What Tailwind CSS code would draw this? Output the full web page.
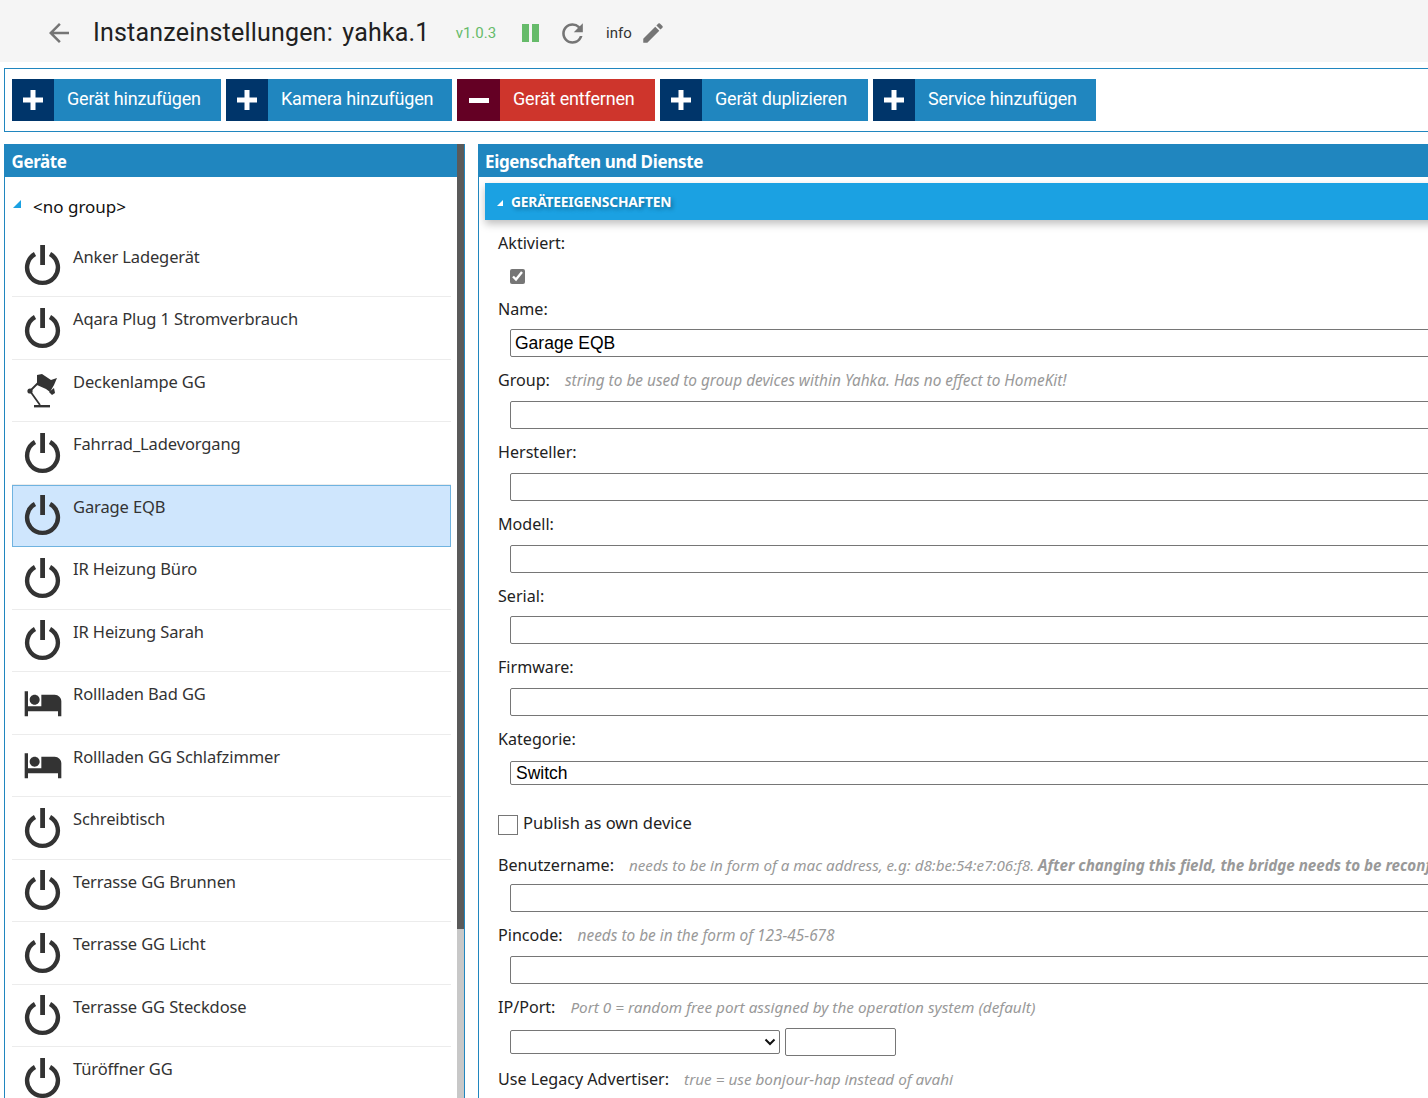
<!DOCTYPE html>
<html lang="de">
<head>
    <meta charset="UTF-8">
    <title>Instanzeinstellungen: yahka.1</title>
    <script src="https://cdn.jsdelivr.net/npm/@tailwindcss/browser@4"></script>
</head>
<body class="bg-white w-[1428px] h-[1098px] overflow-hidden font-['Noto_Sans',sans-serif]">
    <svg class="hidden">
        <defs>
            <symbol id="power" viewBox="0 0 40 42">
                <path d="M12 9a15.4 15.4 0 1 0 15 0" fill="none" stroke="#333" stroke-width="4.4"/>
                <rect x="17.2" y="0" width="4.8" height="20" fill="#333"/>
            </symbol>
            <symbol id="lamp" viewBox="0 0 40 42">
                <path d="M14 2l5-1 9 6 6-2-3 7-4 7-4-3-9-4z" fill="#333"/>
                <path d="M26 19l5-4 1 5-3 2z" fill="#333"/>
                <path d="M7 18L16 9M7 18l10 14" fill="none" stroke="#333" stroke-width="1.8"/>
                <circle cx="7" cy="18" r="2.6" fill="#333"/>
                <rect x="11" y="32" width="16" height="2.4" fill="#333"/>
            </symbol>
            <symbol id="bed" viewBox="0 0 24 24">
                <path fill="#333" d="M7 13c1.66 0 3-1.34 3-3S8.66 7 7 7s-3 1.34-3 3 1.34 3 3 3zm12-6h-8v7H3V5H1v15h2v-3h18v3h2v-9c0-2.21-1.79-4-4-4z"/>
            </symbol>
        </defs>
    </svg>

    <!-- Title bar -->
    <header class="h-[62px] pt-[4px] bg-[#f5f5f5] flex items-center font-['Roboto',sans-serif]">
        <svg class="ml-[44px] w-[30px] h-[30px]" viewBox="0 0 24 24"><path fill="#757575" d="M20 11H7.83l5.59-5.59L12 4l-8 8 8 8 1.41-1.41L7.83 13H20v-2z"/></svg>
        <h1 class="ml-[19px] text-[25px] tracking-[0.2px] text-[#212121] whitespace-nowrap">Instanzeinstellungen: <span class="ml-[3px]">yahka.1</span></h1>
        <span class="ml-[26px] text-[15px] text-[#66bb6a]">v1.0.3</span>
        <div class="ml-[26px] flex gap-[3px]">
            <div class="w-[7px] h-[18px] bg-[#66bb6a]"></div>
            <div class="w-[7px] h-[18px] bg-[#66bb6a]"></div>
        </div>
        <svg class="ml-[18px] w-[31px] h-[31px]" viewBox="0 0 24 24"><path fill="#757575" d="M17.65 6.35A7.96 7.96 0 0 0 12 4c-4.42 0-7.99 3.58-7.99 8s3.57 8 7.99 8c3.73 0 6.84-2.55 7.73-6h-2.08A5.99 5.99 0 0 1 12 18c-3.31 0-6-2.69-6-6s2.69-6 6-6c1.66 0 3.14.69 4.22 1.78L13 11h7V4l-2.35 2.35z"/></svg>
        <span class="ml-[18px] text-[15px] text-[#333]">info</span>
        <svg class="ml-[8px] w-[26px] h-[26px]" viewBox="0 0 24 24"><path fill="#757575" d="M3 17.25V21h3.75L17.81 9.94l-3.75-3.75L3 17.25zM20.71 7.04a1 1 0 0 0 0-1.41l-2.34-2.34a1 1 0 0 0-1.41 0l-1.83 1.83 3.75 3.75 1.83-1.83z"/></svg>
    </header>

    <!-- Toolbar -->
    <div class="mt-[6px] ml-[4px] w-[1500px] h-[64px] border border-[#2086bf] flex items-center gap-[5px] pl-[7px] font-['Roboto',sans-serif] text-[18px] tracking-[-0.17px] text-white">
        <div class="flex w-[209px] h-[42px] bg-[#2086bf]">
            <div class="w-[42px] bg-[#00356a] flex items-center justify-center"><svg class="w-[22px] h-[22px]" viewBox="0 0 22 22"><path fill="#fff" d="M8.5 1h5v7.5H21v5h-7.5V21h-5v-7.5H1v-5h7.5z"/></svg></div>
            <span class="ml-[13px] leading-[40px] whitespace-nowrap">Gerät hinzufügen</span>
        </div>
        <div class="flex w-[226px] h-[42px] bg-[#2086bf]">
            <div class="w-[42px] bg-[#00356a] flex items-center justify-center"><svg class="w-[22px] h-[22px]" viewBox="0 0 22 22"><path fill="#fff" d="M8.5 1h5v7.5H21v5h-7.5V21h-5v-7.5H1v-5h7.5z"/></svg></div>
            <span class="ml-[13px] leading-[40px] whitespace-nowrap">Kamera hinzufügen</span>
        </div>
        <div class="flex w-[198px] h-[42px] bg-[#ce352c]">
            <div class="w-[43px] bg-[#640024] flex items-center justify-center"><div class="w-[20px] h-[5px] bg-white"></div></div>
            <span class="ml-[13px] leading-[40px] whitespace-nowrap">Gerät entfernen</span>
        </div>
        <div class="flex w-[208px] h-[42px] bg-[#2086bf]">
            <div class="w-[42px] bg-[#00356a] flex items-center justify-center"><svg class="w-[22px] h-[22px]" viewBox="0 0 22 22"><path fill="#fff" d="M8.5 1h5v7.5H21v5h-7.5V21h-5v-7.5H1v-5h7.5z"/></svg></div>
            <span class="ml-[13px] leading-[40px] whitespace-nowrap">Gerät duplizieren</span>
        </div>
        <div class="flex w-[223px] h-[42px] bg-[#2086bf]">
            <div class="w-[42px] bg-[#00356a] flex items-center justify-center"><svg class="w-[22px] h-[22px]" viewBox="0 0 22 22"><path fill="#fff" d="M8.5 1h5v7.5H21v5h-7.5V21h-5v-7.5H1v-5h7.5z"/></svg></div>
            <span class="ml-[13px] leading-[40px] whitespace-nowrap">Service hinzufügen</span>
        </div>
    </div>

    <div class="mt-[12px] ml-[4px] flex gap-[13px] w-[1500px] h-[954px] items-start">
        <!-- Device list -->
        <section class="relative w-[461px] h-[954px] border-x border-[#2086bf] overflow-hidden">
            <div class="h-[33px] -mx-px bg-[#2086bf] text-white font-bold text-[17px] leading-[36px] pl-[7.5px] tracking-[-0.4px]">Geräte</div>
            <div class="absolute right-0 top-0 w-[7px] h-[954px] bg-[#c8c8c8]"><div class="h-[785px] bg-[#5a5a5a]"></div></div>
            <div class="h-[20px]"></div>
            <div class="relative h-[20px] pl-[28px] text-[17px] leading-[20px] text-[#111]">
                <span class="absolute left-[8px] top-[3px] w-0 h-0 border-l-[8px] border-b-[8px] border-l-transparent border-b-[#1ba1e2]"></span>&lt;no group&gt;
            </div>
            <ul class="mt-[17px] ml-[7px] w-[439px] text-[16.5px] tracking-[-0.12px] text-[#333]">
                <li class="flex h-[63px] border-b border-[#ececec] pl-[11px] pt-[11px]"><svg class="w-[40px] h-[42px] shrink-0"><use href="#power"/></svg><span class="ml-[10px] leading-[24px]">Anker Ladegerät</span></li>
                <li class="flex h-[62.5px] border-b border-[#ececec] pl-[11px] pt-[10.5px]"><svg class="w-[40px] h-[42px] shrink-0"><use href="#power"/></svg><span class="ml-[10px] mt-[-0.5px] leading-[24px]">Aqara Plug 1 Stromverbrauch</span></li>
                <li class="flex h-[62.5px] border-b border-[#ececec] pl-[11px] pt-[13px]"><svg class="w-[40px] h-[42px] shrink-0"><use href="#lamp"/></svg><span class="ml-[10px] mt-[-3px] leading-[24px]">Deckenlampe GG</span></li>
                <li class="flex h-[62.5px] border-b border-[#ececec] pl-[11px] pt-[10.5px]"><svg class="w-[40px] h-[42px] shrink-0"><use href="#power"/></svg><span class="ml-[10px] mt-[-0.5px] leading-[24px]">Fahrrad_Ladevorgang</span></li>
                <li class="flex h-[62.5px] border border-[#6fb3e0] bg-[#cfe6fd] pl-[10px] pt-[9.5px]"><svg class="w-[40px] h-[42px] shrink-0"><use href="#power"/></svg><span class="ml-[10px] mt-[-0.5px] leading-[24px]">Garage EQB</span></li>
                <li class="flex h-[62.5px] border-b border-[#ececec] pl-[11px] pt-[10.5px]"><svg class="w-[40px] h-[42px] shrink-0"><use href="#power"/></svg><span class="ml-[10px] mt-[-0.5px] leading-[24px]">IR Heizung Büro</span></li>
                <li class="flex h-[62.5px] border-b border-[#ececec] pl-[11px] pt-[10.5px]"><svg class="w-[40px] h-[42px] shrink-0"><use href="#power"/></svg><span class="ml-[10px] mt-[-0.5px] leading-[24px]">IR Heizung Sarah</span></li>
                <li class="flex h-[62.5px] border-b border-[#ececec] pl-[10.5px] pt-[10.5px]"><svg class="w-[40px] h-[40px] shrink-0"><use href="#bed"/></svg><span class="ml-[10.5px] mt-[-0.5px] leading-[24px]">Rollladen Bad GG</span></li>
                <li class="flex h-[62.5px] border-b border-[#ececec] pl-[10.5px] pt-[10.5px]"><svg class="w-[40px] h-[40px] shrink-0"><use href="#bed"/></svg><span class="ml-[10.5px] mt-[-0.5px] leading-[24px]">Rollladen GG Schlafzimmer</span></li>
                <li class="flex h-[62.5px] border-b border-[#ececec] pl-[11px] pt-[10.5px]"><svg class="w-[40px] h-[42px] shrink-0"><use href="#power"/></svg><span class="ml-[10px] mt-[-0.5px] leading-[24px]">Schreibtisch</span></li>
                <li class="flex h-[62.5px] border-b border-[#ececec] pl-[11px] pt-[10.5px]"><svg class="w-[40px] h-[42px] shrink-0"><use href="#power"/></svg><span class="ml-[10px] mt-[-0.5px] leading-[24px]">Terrasse GG Brunnen</span></li>
                <li class="flex h-[62.5px] border-b border-[#ececec] pl-[11px] pt-[10.5px]"><svg class="w-[40px] h-[42px] shrink-0"><use href="#power"/></svg><span class="ml-[10px] mt-[-0.5px] leading-[24px]">Terrasse GG Licht</span></li>
                <li class="flex h-[62.5px] border-b border-[#ececec] pl-[11px] pt-[10.5px]"><svg class="w-[40px] h-[42px] shrink-0"><use href="#power"/></svg><span class="ml-[10px] mt-[-0.5px] leading-[24px]">Terrasse GG Steckdose</span></li>
                <li class="flex h-[62.5px] pl-[11px] pt-[10.5px]"><svg class="w-[40px] h-[42px] shrink-0"><use href="#power"/></svg><span class="ml-[10px] mt-[-0.5px] leading-[24px]">Türöffner GG</span></li>
            </ul>
        </section>

        <!-- Properties -->
        <section class="w-[1020px] h-[954px] border-l border-[#2086bf] overflow-hidden text-[16.1px] text-[#222]">
            <div class="h-[33px] -ml-px bg-[#2086bf] text-white font-bold text-[17px] leading-[36px] pl-[7px] tracking-[-0.35px]">Eigenschaften und Dienste</div>
            <div class="mt-[6px] ml-[6px] h-[37px] pt-[2px] bg-[#1ba1e2] shadow-[0_4px_8px_rgba(0,0,0,0.25)] flex items-center pl-[12px] text-white font-bold text-[13.8px] tracking-[-0.2px] [text-shadow:2px_2px_4px_rgba(0,0,0,0.35)]">
                <span class="w-0 h-0 border-l-[6px] border-b-[6px] border-l-transparent border-b-white"></span>
                <span class="ml-[8px]">GERÄTEEIGENSCHAFTEN</span>
            </div>
            <div class="ml-[19px]">
                <div class="h-[24px] mt-[11px] leading-[24px]">Aktiviert:</div>
                <input type="checkbox" checked class="block ml-[12px] mt-[14px] w-[15px] h-[15px] appearance-auto accent-[#767676]">
                <div class="h-[24px] mt-[13px] leading-[24px]">Name:</div>

                <input value="Garage EQB" class="block mt-[8px] ml-[12px] w-[1000px] h-[28px] border border-[#767676] rounded-[2px] bg-white px-[4px] font-['Liberation_Sans',sans-serif] text-[17.5px] text-black">

                <div class="flex items-baseline h-[24px] mt-[11px] leading-[24px]">Group:<span class="ml-[15px] text-[15.4px] italic text-[#999]">string to be used to group devices within Yahka. Has no effect to HomeKit!</span></div>
                <input class="block mt-[9px] ml-[12px] w-[1000px] h-[28px] border border-[#767676] rounded-[2px] bg-white">

                <div class="h-[24px] mt-[11px] leading-[24px]">Hersteller:</div>
                <input class="block mt-[9px] ml-[12px] w-[1000px] h-[28px] border border-[#767676] rounded-[2px] bg-white">

                <div class="h-[24px] mt-[11px] leading-[24px]">Modell:</div>
                <input class="block mt-[9px] ml-[12px] w-[1000px] h-[28px] border border-[#767676] rounded-[2px] bg-white">

                <div class="h-[24px] mt-[11px] leading-[24px]">Serial:</div>
                <input class="block mt-[8px] ml-[12px] w-[1000px] h-[28px] border border-[#767676] rounded-[2px] bg-white">

                <div class="h-[24px] mt-[11px] leading-[24px]">Firmware:</div>
                <input class="block mt-[9px] ml-[12px] w-[1000px] h-[28px] border border-[#767676] rounded-[2px] bg-white">

                <div class="h-[24px] mt-[11px] leading-[24px]">Kategorie:</div>
                <div class="mt-[10px] ml-[12px] w-[1000px] h-[24px] border border-[#767676] rounded-[2px] bg-white pl-[5px] font-['Liberation_Sans',sans-serif] text-[17.5px] leading-[22px] text-black">Switch</div>

                <div class="flex mt-[30px] h-[20px]">
                    <div class="w-[20px] h-[20px] border border-[#767676] bg-white"></div>
                    <span class="ml-[5px] mt-[-4px] text-[16.5px] leading-[24px]">Publish as own device</span>
                </div>

                <div class="flex items-baseline h-[24px] mt-[18px] leading-[24px] whitespace-nowrap">Benutzername:<span class="ml-[15px] text-[15.2px] italic text-[#999]">needs to be in form of a mac address, e.g: d8:be:54:e7:06:f8. <b>After changing this field, the bridge needs to be reconfigured</b></span></div>
                <input class="block mt-[7px] ml-[12px] w-[1000px] h-[28px] border border-[#767676] rounded-[2px] bg-white">

                <div class="flex items-baseline h-[24px] mt-[11px] leading-[24px]">Pincode:<span class="ml-[15px] text-[15.4px] italic text-[#999]">needs to be in the form of 123-45-678</span></div>
                <input class="block mt-[9px] ml-[12px] w-[1000px] h-[28px] border border-[#767676] rounded-[2px] bg-white">

                <div class="flex items-baseline h-[24px] mt-[11px] leading-[24px]">IP/Port:<span class="ml-[15px] text-[15.3px] italic text-[#999]">Port 0 = random free port assigned by the operation system (default)</span></div>
                <div class="flex items-center gap-[5px] mt-[9px] ml-[12px]">
                    <div class="relative w-[270px] h-[24px] border border-[#767676] rounded-[2px] bg-white">
                        <svg class="absolute right-[3px] top-[7px] w-[12px] h-[8px]" viewBox="0 0 12 8"><path d="M1.5 1.5L6 6l4.5-4.5" fill="none" stroke="#111" stroke-width="2"/></svg>
                    </div>
                    <input class="block w-[111px] h-[28px] border border-[#767676] rounded-[2px] bg-white">
                </div>

                <div class="flex items-baseline h-[24px] mt-[11px] leading-[24px] whitespace-nowrap">Use Legacy Advertiser:<span class="ml-[15px] text-[15.3px] italic text-[#999]">true = use bonjour-hap instead of avahi</span></div>
            </div>
        </section>
    </div>
</body>
</html>
